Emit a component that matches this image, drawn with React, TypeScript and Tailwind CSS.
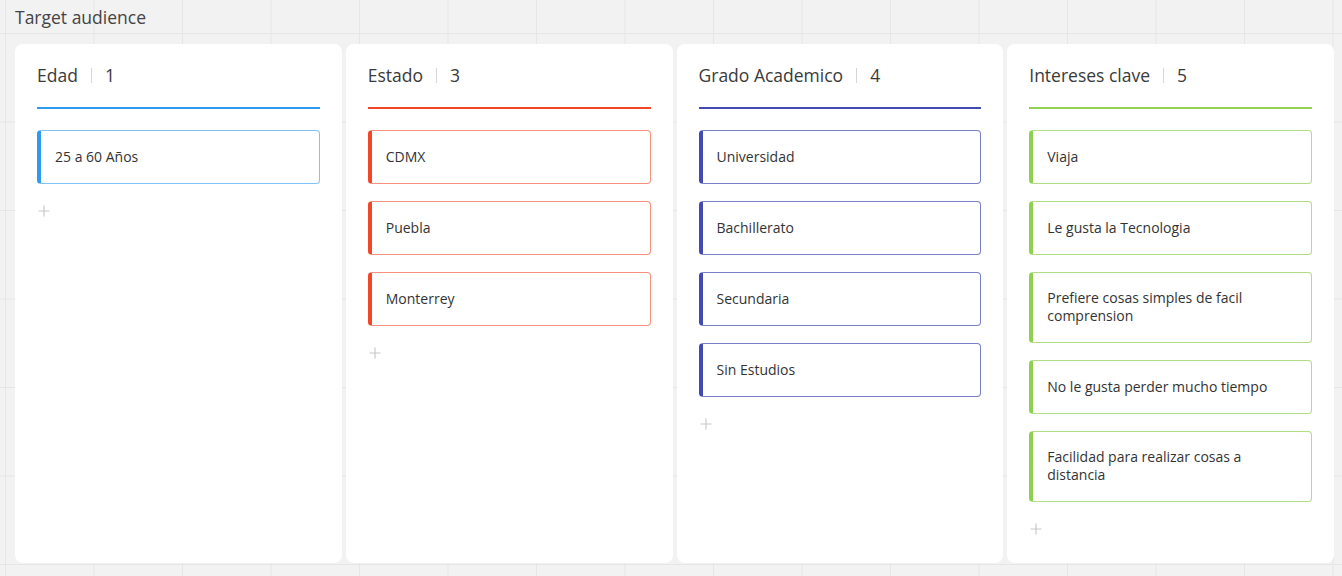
const columns = [
  {
    title: 'Edad',
    color: { line: 'bg-[#2d9bf0]', strip: 'border-l-[#2d9bf0]', edge: 'border-[#2d9bf0]/60' },
    items: ['25 a 60 Años'],
  },
  {
    title: 'Estado',
    color: { line: 'bg-[#f24726]', strip: 'border-l-[#f24726]', edge: 'border-[#f24726]/60' },
    items: ['CDMX', 'Puebla', 'Monterrey'],
  },
  {
    title: 'Grado Academico',
    color: { line: 'bg-[#414bb2]', strip: 'border-l-[#414bb2]', edge: 'border-[#414bb2]/70' },
    items: ['Universidad', 'Bachillerato', 'Secundaria', 'Sin Estudios'],
  },
  {
    title: 'Intereses clave',
    color: { line: 'bg-[#8fd14f]', strip: 'border-l-[#8fd14f]', edge: 'border-[#8fd14f]/70' },
    items: [
      'Viaja',
      'Le gusta la Tecnologia',
      'Prefiere cosas simples de facil comprension',
      'No le gusta perder mucho tiempo',
      'Facilidad para realizar cosas a distancia',
    ],
  },
]

function Plus() {
  return (
    <svg width="12" height="12" viewBox="0 0 12 12" className="text-[#c8c8c8]">
      <path d="M6 0.5v11M0.5 6h11" stroke="currentColor" strokeWidth="1.2" />
    </svg>
  )
}

export default function App() {
  return (
    <div
      className="h-[576px] w-[1342px] overflow-hidden bg-[#f2f2f2] bg-[linear-gradient(to_right,#e6e6e6_1px,transparent_1px),linear-gradient(to_bottom,#e6e6e6_1px,transparent_1px)] bg-size-[88.5px_88.5px] bg-position-[5px_33px] px-[15px] font-['Open_Sans',sans-serif]"
    >
      <h1 className="pt-[5px] text-[17.5px] leading-6 text-[#444]">Target audience</h1>

      <div className="mt-[15px] grid w-[1319px] grid-cols-4 gap-1">
        {columns.map((col, i) => (
          <div key={i} className="h-[519px] rounded-lg bg-white px-[22px] pt-5">
            <div className="flex items-center text-[17.5px] leading-[22px] text-[#3a3a3a]">
              <span>{col.title}</span>
              <span className="mx-[13px] h-[15px] w-px bg-[#d6d6d6]" />
              <span>{col.items.length}</span>
            </div>
            <div className={`mt-[21px] h-[2px] ${col.color.line}`} />

            <div className="mt-[21px] flex flex-col gap-[17.5px]">
              {col.items.map((item, j) => (
                <div
                  key={j}
                  className={`flex min-h-[53.5px] items-center rounded-[4px] border border-l-4 bg-white pt-4 pb-[16.5px] pl-[14px] pr-4 text-[14px] leading-[18px] text-[#333] ${col.color.edge} ${col.color.strip}`}
                >
                  {item}
                </div>
              ))}
            </div>

            <div className="mt-[21px] pl-[1px]">
              <Plus />
            </div>
          </div>
        ))}
      </div>
    </div>
  )
}
